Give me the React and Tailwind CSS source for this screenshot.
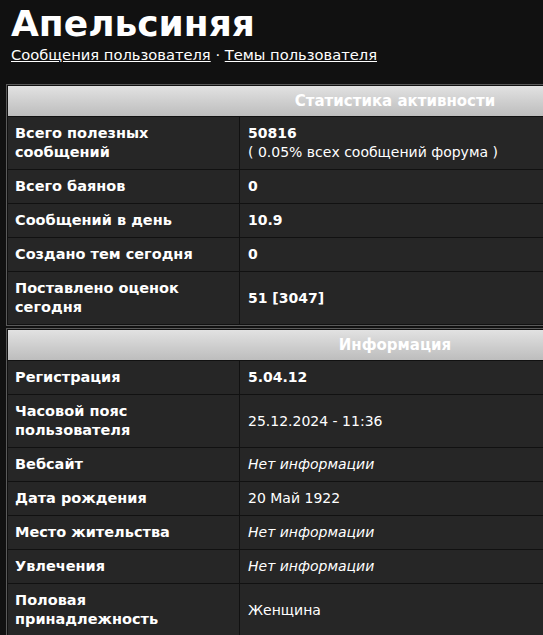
import React from 'react';

const stats = [
  { label: 'Всего полезных сообщений', value: '50816', sub: '( 0.05% всех сообщений форума )', bold: true },
  { label: 'Всего баянов', value: '0', bold: true },
  { label: 'Сообщений в день', value: '10.9', bold: true },
  { label: 'Создано тем сегодня', value: '0', bold: true },
  { label: 'Поставлено оценок сегодня', value: '51 [3047]', bold: true },
];

const info = [
  { label: 'Регистрация', value: '5.04.12', bold: true },
  { label: 'Часовой пояс пользователя', value: '25.12.2024 - 11:36' },
  { label: 'Вебсайт', value: 'Нет информации', italic: true },
  { label: 'Дата рождения', value: '20 Май 1922' },
  { label: 'Место жительства', value: 'Нет информации', italic: true },
  { label: 'Увлечения', value: 'Нет информации', italic: true },
  { label: 'Половая принадлежность', value: 'Женщина' },
];

function StatTable({ title, rows }) {
  return (
    <div className="w-[778px] border border-[#5a5a5a] bg-[#111] p-px">
      <div className="grid grid-cols-[231px_1fr] gap-px">
        {/* header row spans both columns */}
        <div className="col-span-2 h-[30px] flex items-center justify-center bg-gradient-to-b from-[#e2e2e2] to-[#bdbdbd] text-white font-bold text-[15px]">
          {title}
        </div>
        {rows.map((r, i) => (
          <React.Fragment key={i}>
            <div className="bg-[#262626] px-[7px] py-[7px] flex items-center font-bold text-white leading-[19px] text-[14.5px]">
              <span>{r.label}</span>
            </div>
            <div
              className={
                'bg-[#262626] px-[8px] py-[7px] flex flex-col justify-center text-white leading-[19px] text-[14px] ' +
                (r.bold ? 'font-bold ' : '') +
                (r.italic ? 'italic' : '')
              }
            >
              <span>{r.value}</span>
              {r.sub && <span className="font-normal">{r.sub}</span>}
            </div>
          </React.Fragment>
        ))}
      </div>
    </div>
  );
}

export default function App() {
  return (
    <div
      className="min-h-screen w-full overflow-hidden bg-[#111] text-white pl-[6px]"
      style={{ fontFamily: '"DejaVu Sans", Verdana, sans-serif' }}
    >
      <div className="pl-[5px] pt-[3px]">
        <h1 className="text-[36px] font-bold leading-[42px]">Апельсиняя</h1>
        <div className="text-[14.7px] leading-[20px]">
          <a href="#" className="underline">Сообщения пользователя</a>
          {' · '}
          <a href="#" className="underline">Темы пользователя</a>
        </div>
      </div>
      <div className="mt-[19px] flex flex-col gap-[2px]">
        <StatTable title="Статистика активности" rows={stats} />
        <StatTable title="Информация" rows={info} />
      </div>
    </div>
  );
}
